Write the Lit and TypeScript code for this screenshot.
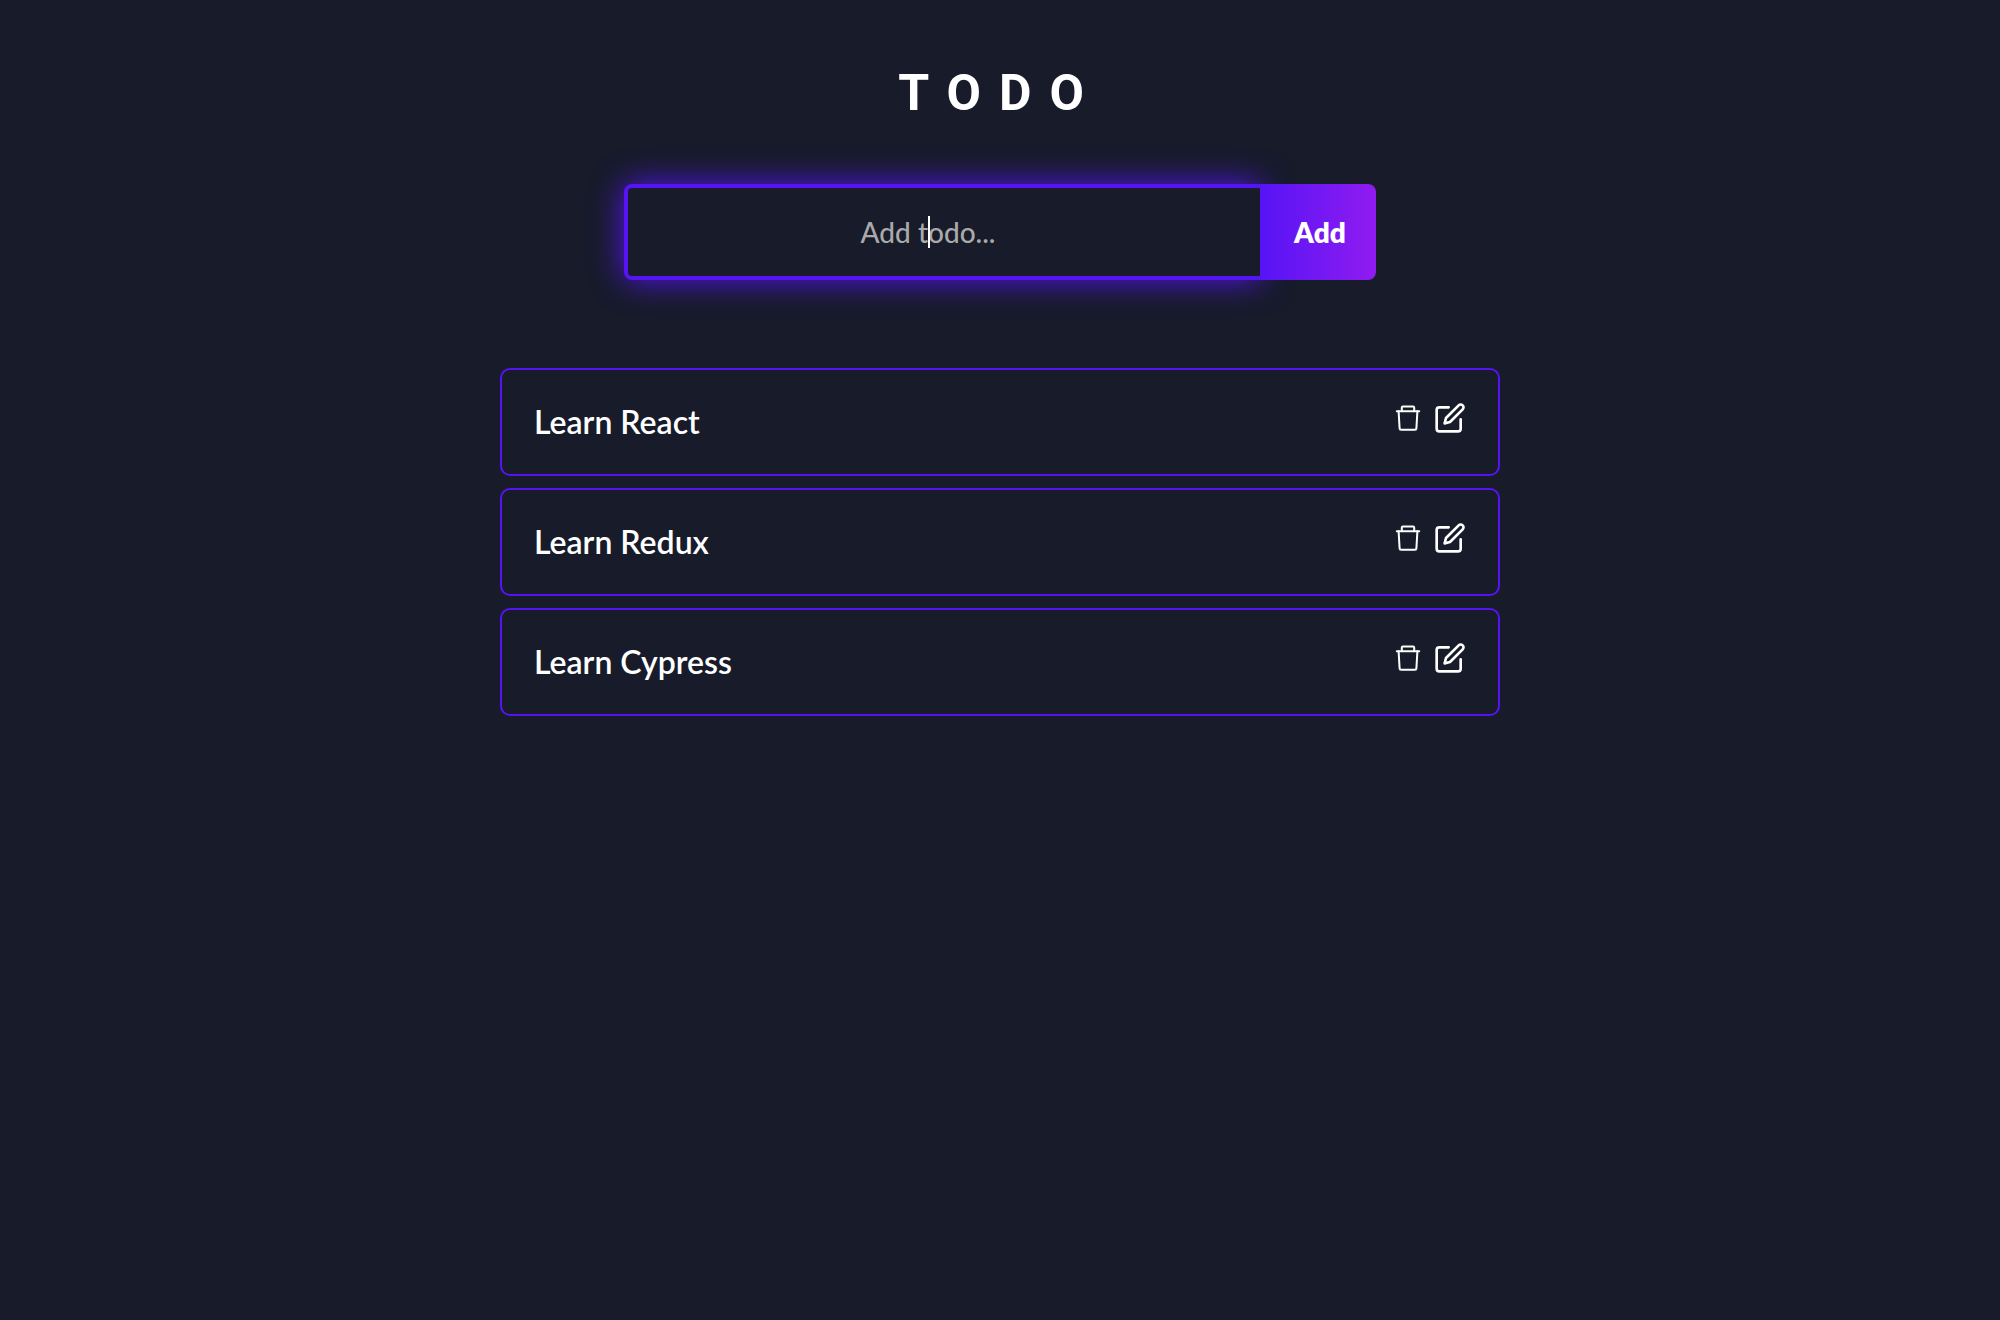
import { LitElement, html, css, svg } from "lit";
import { customElement, state } from "lit/decorators.js";

const trashIcon = svg`
  <path d="M4.8 9.2h22.4" />
  <path d="M9.8 9V5.6a1.2 1.2 0 0 1 1.2-1.2h10a1.2 1.2 0 0 1 1.2 1.2V9" />
  <path d="M6.6 9.2l1 17.2a1.5 1.5 0 0 0 1.5 1.4h13.8a1.5 1.5 0 0 0 1.5-1.4L25.4 9.2" />`;

const editIcon = svg`
  <path d="M11 4H4a2 2 0 0 0-2 2v14a2 2 0 0 0 2 2h14a2 2 0 0 0 2-2v-7" />
  <path d="M18.5 2.5a2.121 2.121 0 0 1 3 3L12 15l-4 1 1-4 9.5-9.5z" />`;

@customElement("app-root")
export class AppRoot extends LitElement {
  static styles = css`
    :host {
      --bg: #171b2a;
      --accent: #5614f5;
      display: block;
      box-sizing: border-box;
      min-height: 100vh;
      padding: 64px 32px;
      background: var(--bg);
      color: #fff;
      font-family: Lato, "Open Sans", sans-serif;
    }
    *, *::before, *::after { box-sizing: border-box; }
    .page {
      display: flex;
      flex-direction: column;
      align-items: center;
    }
    .title {
      margin: 0 0 62px;
      font-family: Roboto, sans-serif;
      font-size: 50px;
      line-height: 58px;
      font-weight: 700;
      letter-spacing: 18px;
    }
    .form {
      display: flex;
      width: 100%;
      max-width: 752px;
      margin-bottom: 88px;
    }
    .field {
      position: relative;
      display: flex;
      flex: 1;
    }
    .input {
      flex: 1;
      min-width: 0;
      height: 96px;
      padding: 0 32px 0 0;
      border: 4px solid var(--accent);
      border-right: 0;
      border-radius: 8px 0 0 8px;
      outline: 0;
      background: var(--bg);
      box-shadow: 0 0 32px var(--accent);
      color: #fff;
      font: inherit;
      font-size: 28px;
      font-weight: 500;
      text-align: center;
    }
    .input::placeholder { color: #aaa; opacity: 1; }
    .caret {
      position: absolute;
      top: 32px;
      left: calc(50% - 14px);
      width: 2px;
      height: 32px;
      background: #fff;
      pointer-events: none;
    }
    .add {
      position: relative;
      width: 116px;
      padding: 0 0 0 4px;
      border: 0;
      border-radius: 0 8px 8px 0;
      background: linear-gradient(90deg, #5614f5, #901cf0);
      color: #fff;
      font: inherit;
      font-size: 28px;
      font-weight: 800;
      cursor: pointer;
    }
    .list {
      display: flex;
      flex-direction: column;
      gap: 12px;
      width: 100%;
      max-width: 1000px;
      margin: 0;
      padding: 0;
      list-style: none;
    }
    .item {
      display: flex;
      justify-content: space-between;
      align-items: flex-start;
      padding: 32px;
      border: 2px solid var(--accent);
      border-radius: 10px;
    }
    .name { font-size: 32px; line-height: 40px; font-weight: 600; }
    .actions { display: flex; gap: 10px; }
    .action {
      display: block;
      width: 32px;
      height: 32px;
      padding: 0;
      border: 0;
      background: none;
      color: inherit;
      cursor: pointer;
    }
    .icon {
      display: block;
      width: 32px;
      height: 32px;
      fill: none;
      stroke: currentColor;
      stroke-width: 2;
      stroke-linecap: round;
      stroke-linejoin: round;
    }
  `;

  @state() private todos = ["Learn React", "Learn Redux", "Learn Cypress"];
  @state() private draft = "";

  private add(e: Event) {
    e.preventDefault();
    const text = this.draft.trim();
    if (!text) return;
    this.todos = [...this.todos, text];
    this.draft = "";
  }

  private remove(index: number) {
    this.todos = this.todos.filter((_, i) => i !== index);
  }

  private edit(index: number) {
    this.draft = this.todos[index];
    this.remove(index);
  }

  render() {
    return html`
      <main class="page">
        <h1 class="title">TODO</h1>
        <form class="form" @submit=${this.add}>
          <div class="field">
            <input class="input" type="text" aria-label="Add todo" placeholder="Add todo..." autocomplete="off"
              .value=${this.draft}
              @input=${(e: InputEvent) => (this.draft = (e.target as HTMLInputElement).value)} />
            ${this.draft ? null : html`<span class="caret"></span>`}
          </div>
          <button class="add" type="submit">Add</button>
        </form>
        <ul class="list">
          ${this.todos.map((todo, i) => html`
            <li class="item">
              <span class="name">${todo}</span>
              <div class="actions">
                <button class="action" type="button" aria-label="Delete" @click=${() => this.remove(i)}>
                  <svg class="icon" viewBox="0 0 32 32" aria-hidden="true">${trashIcon}</svg>
                </button>
                <button class="action" type="button" aria-label="Edit" @click=${() => this.edit(i)}>
                  <svg class="icon" viewBox="0 0 24 24" aria-hidden="true">${editIcon}</svg>
                </button>
              </div>
            </li>`)}
        </ul>
      </main>`;
  }
}
